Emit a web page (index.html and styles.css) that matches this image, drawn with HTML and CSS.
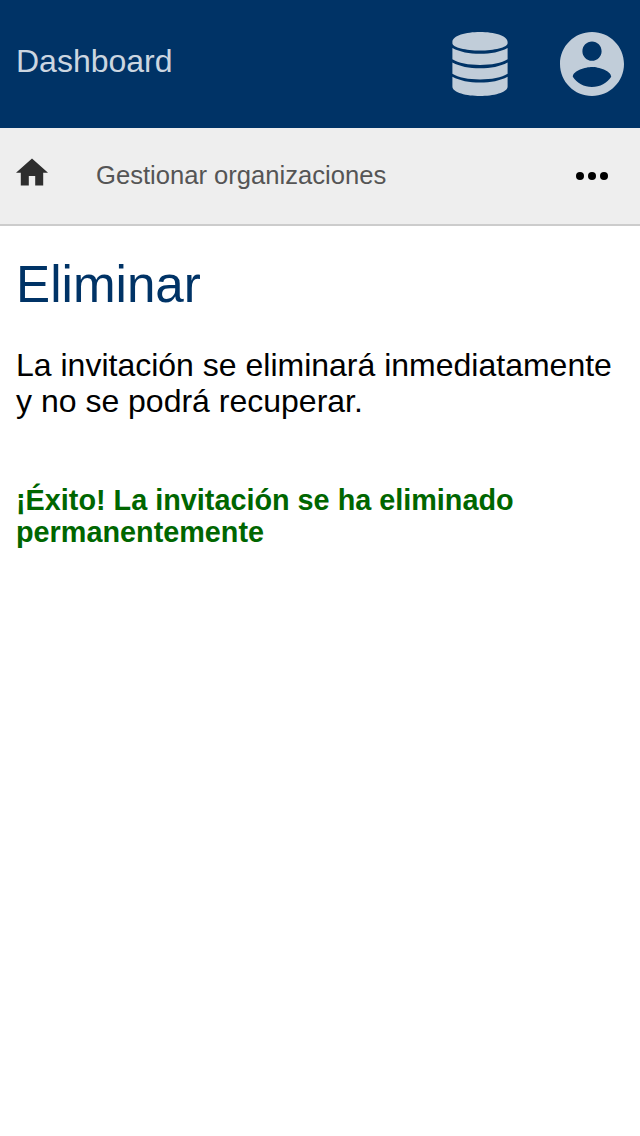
FILE: index.html
```html
<!DOCTYPE html>
<html lang="es">
<head>
<meta charset="utf-8">
<title>Eliminar</title>
<link rel="stylesheet" href="styles.css">
</head>
<body>
<header class="header">
  <span class="brand">Dashboard</span>
  <svg class="icon-db" viewBox="0 0 56 64"><path d="M.4 10C.4 3.500 14 0 28 0s27.600 3.500 27.600 10v1.200C55.600 15.500 42 18.500 28 18.500S.4 15.500.4 11.200zM.4 16C8 20 17 21.800 28 21.800S48 20 55.600 16v11.300C50 31.200 39 33 28 33S6 31.200.4 27.300zM.4 30.400C8 34.400 17 36.200 28 36.200s20-1.800 27.600-5.800v11.300C50 45.600 39 47.400 28 47.400S6 45.600.4 41.700zM.4 44.800C8 48.800 17 50.600 28 50.600s20-1.800 27.600-5.800v9.700C55.600 60.700 41 64 28 64S.4 60.700.4 54.500z"/></svg>
  <svg class="icon-user" viewBox="2 2 20 20"><path d="M12 2C6.480 2 2 6.480 2 12s4.480 10 10 10 10-4.480 10-10S17.520 2 12 2zm0 3c1.660 0 3 1.340 3 3s-1.340 3-3 3-3-1.340-3-3 1.340-3 3-3zm0 14.200c-2.500 0-4.710-1.280-6-3.220.03-1.990 4-3.080 6-3.080 1.990 0 5.970 1.090 6 3.080-1.290 1.940-3.500 3.220-6 3.220z"/></svg>
</header>
<nav class="nav">
  <svg class="icon-home" viewBox="2 2.750 20 17.500"><path d="M10 20v-6h4v6h5v-8h3L12 3 2 12h3v8z"/></svg>
  <span class="crumb">Gestionar organizaciones</span>
  <svg class="icon-more" viewBox="0 0 32 8"><circle cx="4" cy="4" r="4"/><circle cx="16" cy="4" r="4"/><circle cx="28" cy="4" r="4"/></svg>
</nav>
<main class="main">
  <h1 class="title">Eliminar</h1>
  <p class="text">La invitación se eliminará inmediatamente y no se podrá recuperar.</p>
  <p class="success">¡Éxito! La invitación se ha eliminado permanentemente</p>
</main>
</body>
</html>
```
FILE: styles.css
```css
* { box-sizing: border-box; }
body { margin: 0; background: #fff; color: #000; font-family: "Liberation Sans", Arial, sans-serif; }
.header { display: flex; align-items: center; height: 128px; padding: 0 16px; background: #003366; color: #ccd6e0; fill: #c1cdd9; }
.brand { margin: 0 auto 6px 0; font-size: 32px; line-height: 36px; }
.icon-db { width: 56px; height: 64px; margin-right: 52px; }
.icon-user { width: 64px; height: 64px; }
.nav { display: flex; align-items: center; height: 98px; padding: 0 32px 0 16px; background: #eee; border-bottom: 2px solid #ccc; }
.icon-home { width: 32px; height: 28px; margin: 0 48px 8px 0; fill: #2e2e2e; }
.crumb { font-size: 25.6px; line-height: 30px; margin-bottom: 2px; color: #555; }
.icon-more { width: 32px; height: 8px; margin-left: auto; }
.main { padding: 30px 16px 0; }
.title { margin: 0; font-size: 51.2px; line-height: 58px; font-weight: 400; color: #003366; }
.text { margin: 33px 0 0; font-size: 32px; line-height: 36px; }
.success { margin: 65px 0 0; font-size: 28.8px; line-height: 32px; font-weight: 700; color: #006600; }
```
